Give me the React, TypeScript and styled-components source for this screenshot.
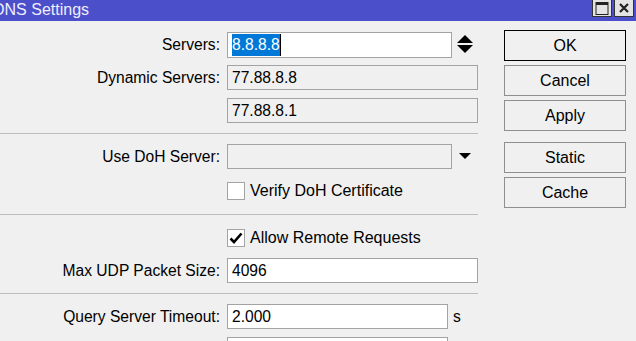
import React from "react";
import styled, { createGlobalStyle } from "styled-components";

const Global = createGlobalStyle`
  html, body { margin: 0; padding: 0; background: #f0f0f0; overflow: hidden; }
  body { font-family: "Liberation Sans", Arial, sans-serif; }
`;

const Window = styled.div`
  width: 636px;
  height: 341px;
  display: flex;
  flex-direction: column;
  background: #f0f0f0;
  overflow: hidden;
`;

const TitleBar = styled.div`
  height: 21px;
  flex: none;
  background: #4b4fca;
  display: flex;
  align-items: flex-start;
  justify-content: space-between;
`;

const Title = styled.div`
  color: #eeeeff;
  font-size: 16px;
  line-height: 19px;
  margin-left: -7px;
  white-space: nowrap;
`;

const TitleButtons = styled.div`
  display: flex;
  gap: 2px;
  margin-right: 2px;
`;

const TitleButton = styled.div`
  width: 20px;
  height: 17px;
  box-sizing: border-box;
  background: #e4e4e4;
  border: 1px solid #333;
  border-top: none;
  display: flex;
  align-items: center;
  justify-content: center;
`;

const Body = styled.div`
  display: flex;
  align-items: flex-start;
`;

const Form = styled.div`
  width: 478px;
  display: flex;
  flex-direction: column;
  padding-top: 7px;
`;

const Section = styled.div`
  display: flex;
  flex-direction: column;
  padding-bottom: 6px;
`;

const Separator = styled.div`
  height: 1px;
  background: #bdbdbd;
  margin-bottom: 6px;
`;

const Row = styled.div<{ $h?: number }>`
  height: ${(p) => p.$h ?? 33}px;
  display: grid;
  grid-template-columns: 220px 1fr;
  column-gap: 7px;
  align-items: center;
`;

const Label = styled.div`
  text-align: right;
  font-size: 15.6px;
  color: #000;
  white-space: nowrap;
`;

const FieldLine = styled.div`
  display: flex;
  align-items: center;
`;

const Field = styled.div<{ $w: number; $h?: number; $ro?: boolean }>`
  width: ${(p) => p.$w}px;
  height: ${(p) => p.$h ?? 25}px;
  box-sizing: border-box;
  border: 1px solid #a3a3a3;
  background: ${(p) => (p.$ro ? "#f0f0f0" : "#ffffff")};
  display: flex;
  align-items: center;
  padding-left: 4px;
  font-size: 15.6px;
  color: #000;
  white-space: nowrap;
`;

const Selected = styled.span`
  background: #0078d7;
  color: #fff;
  padding: 2px 0 2px 0;
  border-right: 1px solid #000;
`;

const Unit = styled.span`
  font-size: 15.6px;
  margin-left: 5px;
`;

const IconSlot = styled.div`
  width: 26px;
  display: flex;
  justify-content: center;
  align-items: center;
`;

const CheckBox = styled.div`
  width: 18px;
  height: 18px;
  box-sizing: border-box;
  border: 1px solid #a3a3a3;
  background: #fff;
  display: flex;
  align-items: center;
  justify-content: center;
  flex: none;
`;

const CheckLabel = styled.span`
  font-size: 16px;
  margin-left: 5px;
  white-space: nowrap;
`;

const Buttons = styled.div`
  margin-left: 26px;
  padding-top: 9px;
  display: flex;
  flex-direction: column;
`;

const Button = styled.div<{ $default?: boolean; $gapTop?: number }>`
  width: 122px;
  height: 31px;
  box-sizing: border-box;
  margin-top: ${(p) => p.$gapTop ?? 0}px;
  border: 1px solid ${(p) => (p.$default ? "#000" : "#8f8f8f")};
  background: #f0f0f0;
  display: flex;
  align-items: center;
  justify-content: center;
  font-size: 16px;
  color: #000;
`;

const Check = () => (
  <svg width="14" height="14" viewBox="0 0 14 14">
    <path d="M1.5 7.5 L5 11 L12.5 2.5" stroke="#000" strokeWidth="2.6" fill="none" />
  </svg>
);

export default function App() {
  return (
    <Window>
      <Global />
      <TitleBar>
        <Title>DNS Settings</Title>
        <TitleButtons>
          <TitleButton>
            <svg width="14" height="13" viewBox="0 0 14 13">
              <rect x="1" y="0.5" width="12" height="12" fill="none" stroke="#222" />
              <rect x="1" y="0" width="12" height="3" fill="#222" />
            </svg>
          </TitleButton>
          <TitleButton>
            <svg width="12" height="12" viewBox="0 0 12 12">
              <path d="M2 2 L10 10 M10 2 L2 10" stroke="#222" strokeWidth="2.2" />
            </svg>
          </TitleButton>
        </TitleButtons>
      </TitleBar>
      <Body>
        <Form>
          <Section>
            <Row>
              <Label>Servers:</Label>
              <FieldLine>
                <Field $w={225} $h={26}>
                  <Selected>8.8.8.8</Selected>
                </Field>
                <IconSlot>
                  <svg width="16" height="19" viewBox="0 0 16 19">
                    <path d="M8 0 L16 8 L0 8 Z" fill="#000" />
                    <path d="M0 10 L16 10 L8 18 Z" fill="#000" />
                  </svg>
                </IconSlot>
              </FieldLine>
            </Row>
            <Row>
              <Label>Dynamic Servers:</Label>
              <Field $w={251} $ro>77.88.8.8</Field>
            </Row>
            <Row>
              <Label />
              <Field $w={251} $ro>77.88.8.1</Field>
            </Row>
          </Section>
          <Separator />
          <Section>
            <Row>
              <Label>Use DoH Server:</Label>
              <FieldLine>
                <Field $w={225} $ro />
                <IconSlot>
                  <svg width="12" height="7" viewBox="0 0 12 7">
                    <path d="M0 0 L12 0 L6 6 Z" fill="#000" />
                  </svg>
                </IconSlot>
              </FieldLine>
            </Row>
            <Row $h={35}>
              <Label />
              <FieldLine>
                <CheckBox />
                <CheckLabel>Verify DoH Certificate</CheckLabel>
              </FieldLine>
            </Row>
          </Section>
          <Separator />
          <Section>
            <Row>
              <Label />
              <FieldLine>
                <CheckBox>
                  <Check />
                </CheckBox>
                <CheckLabel>Allow Remote Requests</CheckLabel>
              </FieldLine>
            </Row>
            <Row>
              <Label>Max UDP Packet Size:</Label>
              <Field $w={251}>4096</Field>
            </Row>
          </Section>
          <Separator />
          <Section>
            <Row>
              <Label>Query Server Timeout:</Label>
              <FieldLine>
                <Field $w={221}>2.000</Field>
                <Unit>s</Unit>
              </FieldLine>
            </Row>
            <Row>
              <Label />
              <FieldLine>
                <Field $w={221} />
              </FieldLine>
            </Row>
          </Section>
        </Form>
        <Buttons>
          <Button $default>OK</Button>
          <Button $gapTop={4}>Cancel</Button>
          <Button $gapTop={4}>Apply</Button>
          <Button $gapTop={11}>Static</Button>
          <Button $gapTop={4}>Cache</Button>
        </Buttons>
      </Body>
    </Window>
  );
}
